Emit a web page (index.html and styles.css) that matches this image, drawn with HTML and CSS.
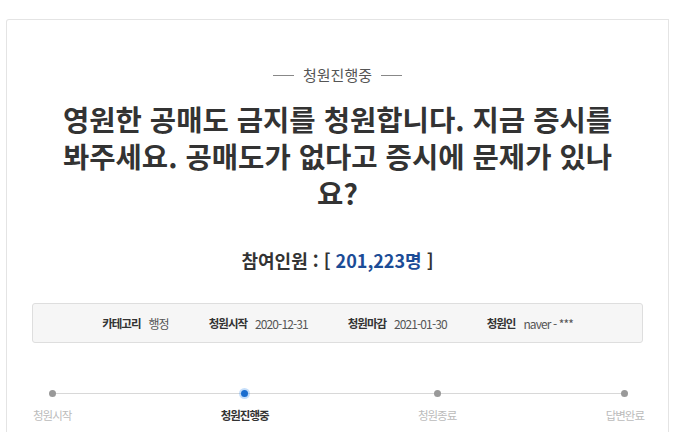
FILE: index.html
```html
<!DOCTYPE html>
<html lang="ko">
<head>
<meta charset="utf-8">
<link rel="stylesheet" href="styles.css">
</head>
<body>
<div class="board">
  <div class="status"><span class="dash"></span><span class="status-text">청원진행중</span><span class="dash"></span></div>
  <h3 class="title">영원한 공매도 금지를 청원합니다. 지금 증시를 봐주세요. 공매도가 없다고 증시에 문제가 있나요?</h3>
  <h2 class="count">참여인원 : [ <span class="num">201,223명</span> ]</h2>
  <div class="info">
    <div class="item"><strong>카테고리</strong><span>행정</span></div>
    <div class="item"><strong>청원시작</strong><span>2020-12-31</span></div>
    <div class="item"><strong>청원마감</strong><span>2021-01-30</span></div>
    <div class="item"><strong>청원인</strong><span>naver - ***</span></div>
  </div>
  <div class="progress">
    <div class="track"></div>
    <div class="step"><span class="dot"></span><span class="label">청원시작</span></div>
    <div class="step on"><span class="dot"></span><span class="label">청원진행중</span></div>
    <div class="step"><span class="dot"></span><span class="label">청원종료</span></div>
    <div class="step"><span class="dot"></span><span class="label">답변완료</span></div>
  </div>
</div>
</body>
</html>
```
FILE: styles.css
```css
html, body {
  margin: 0;
  padding: 0;
  background: #fff;
}
body {
  font-family: "Noto Sans CJK KR", "Noto Sans", sans-serif;
  color: #333;
}
.board {
  margin: 19px 0 0 6px;
  width: 663px;
  height: 413px;
  border: 1px solid #e4e4e4;
  border-bottom: none;
  border-top-left-radius: 3px;
  padding: 44px 25px 0;
  box-sizing: border-box;
}
.status {
  display: flex;
  justify-content: center;
  align-items: center;
  gap: 9px;
  height: 22px;
}
.dash {
  width: 21px;
  height: 1px;
  background: #888;
}
.status-text {
  font-size: 15px;
  color: #555;
  line-height: 22px;
}
.title {
  margin: 14px auto 0;
  width: 562px;
  font-size: 28.6px;
  line-height: 37px;
  font-weight: 700;
  text-align: center;
  color: #333;
}
.count {
  margin: 36px 0 0;
  font-size: 18px;
  line-height: 26px;
  font-weight: 700;
  text-align: center;
  color: #333;
}
.num {
  color: #1c4c96;
}
.info {
  margin-top: 30px;
  height: 40px;
  box-sizing: border-box;
  border: 1px solid #dedede;
  border-radius: 3px;
  background: #f6f6f6;
  display: flex;
  justify-content: center;
  align-items: center;
  gap: 40px;
  font-size: 11.5px;
  padding-left: 0;
}
.item {
  display: flex;
  gap: 8px;
}
.item strong {
  color: #333;
  font-weight: 700;
  letter-spacing: -1px;
}
.item span {
  color: #555;
  font-size: 12px;
  letter-spacing: -0.9px;
}
.progress {
  position: relative;
  margin: 43px -1px 0 1px;
  display: flex;
  justify-content: space-between;
}
.track {
  position: absolute;
  left: 20px;
  right: 21px;
  top: 7px;
  height: 1px;
  background: #d8d8d8;
}
.step {
  position: relative;
  display: flex;
  flex-direction: column;
  align-items: center;
}
.dot {
  width: 7px;
  height: 7px;
  margin: 4px 0 3px;
  border-radius: 50%;
  background: #999;
}
.step.on .dot {
  background: #1a6dcf;
  box-shadow: 0 0 0 2px rgba(90, 160, 240, 0.35);
}
.label {
  margin-top: 6px;
  font-size: 11.5px;
  letter-spacing: -1px;
  line-height: 18px;
  color: #bbb;
}
.step.on .label {
  color: #333;
  font-weight: 700;
}
```
